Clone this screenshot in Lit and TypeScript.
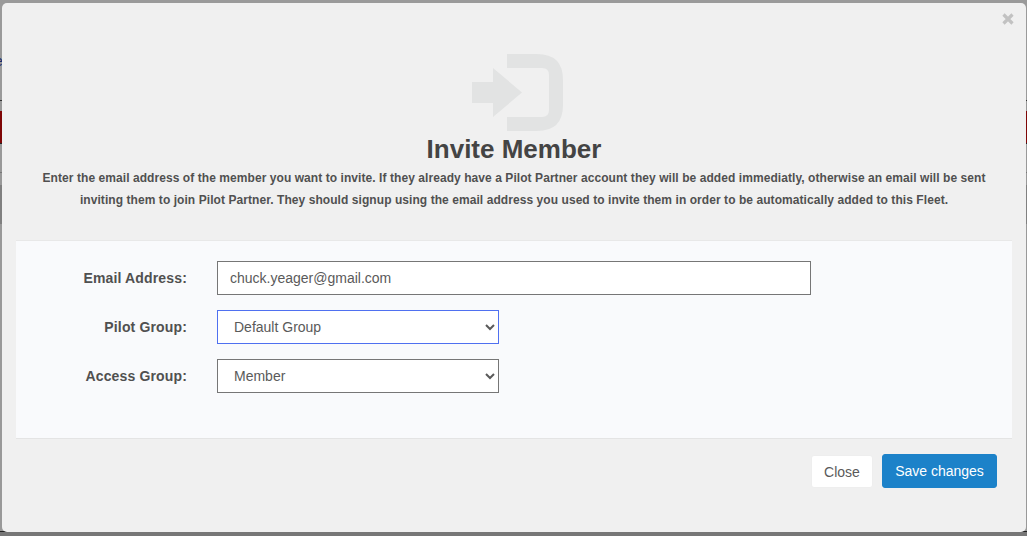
import { LitElement, html, css } from "lit";
import { customElement } from "lit/decorators.js";

@customElement("app-root")
export class AppRoot extends LitElement {
  static styles = css`
    :host {
      display: block;
      width: 1027px;
      height: 536px;
      overflow: hidden;
      position: relative;
      background: #999;
      font-family: "Liberation Sans", Arial, sans-serif;
      color: #444;
    }
    .bg {
      position: absolute;
      inset: 0;
      display: flex;
      flex-direction: column;
    }
    .bg-top { height: 100px; background: #9a9a9a; border-bottom: 1px solid #333; overflow: hidden; position: relative; }
    .stub { position: absolute; left: -5px; top: 53px; font-size: 14px; color: #1a2a66; }
    .bg-red { height: 32px; margin-top: 10px; background: #7f0606; border-bottom: 1px solid #222; }
    .bg-mid { height: 28px; border-bottom: 1px solid #777; }
    .bg-dark { height: 39px; margin-top: 12px; background: #808080; }
    .bg-bottom { flex: 1; background: #999; }
    .bg-line { height: 1px; background: #222; }
    .bg-base { height: 4px; background: #777; }
    .modal {
      position: absolute;
      left: 2px;
      top: 3px;
      width: 1024px;
      height: 529px;
      box-sizing: border-box;
      background: #f0f0f0;
      border-radius: 5px;
      display: flex;
      flex-direction: column;
    }
    .close-x {
      position: absolute;
      right: 12px;
      top: 10px;
      width: 12px;
      height: 12px;
    }
    .head {
      display: flex;
      flex-direction: column;
      align-items: center;
      height: 237px;
      padding: 0 14px;
      box-sizing: border-box;
    }
    .logo { margin: 51px 0 0 7px; display: block; }
    h1 {
      margin: 3px 0 0;
      font-size: 26px;
      line-height: 30px;
      font-weight: 700;
      color: #444;
    }
    .desc {
      margin: 3px 0 0;
      text-align: center;
      font-size: 12px;
      line-height: 22px;
      font-weight: 700;
      letter-spacing: 0.066px;
      color: #505050;
      white-space: nowrap;
    }
    .body {
      margin: 0 14px;
      height: 199px;
      box-sizing: border-box;
      background: #f9fafc;
      border-top: 1px solid #e8e8e8;
      border-bottom: 1px solid #e4e4e4;
      padding-top: 20px;
      display: flex;
      flex-direction: column;
      gap: 15px;
    }
    .row { display: flex; align-items: center; height: 34px; }
    label {
      width: 171px;
      text-align: right;
      margin-right: 30px;
      font-size: 14px;
      font-weight: 700;
      letter-spacing: 0.15px;
      color: #505050;
    }
    .field {
      box-sizing: border-box;
      height: 34px;
      border: 1px solid #767676;
      background: #fff;
      font-family: inherit;
      font-size: 14px;
      color: #5a5a5a;
      border-radius: 0;
      outline: none;
    }
    input.field { width: 594px; padding: 0 12px; }
    select.field { width: 282px; padding: 0 12px; }
    select.focus { border-color: #4f70f0; }
    .foot {
      flex: 1;
      display: flex;
      justify-content: flex-end;
      align-items: flex-start;
      gap: 9px;
      padding: 15px 29px 0 0;
    }
    button {
      font-family: inherit;
      font-size: 14px;
      box-sizing: border-box;
      border-radius: 3px;
      cursor: pointer;
    }
    .btn-close {
      margin-top: 1px;
      width: 62px;
      height: 33px;
      background: #fff;
      color: #5a5a5a;
      border: 1px solid #eee;
    }
    .btn-save {
      width: 115px;
      height: 34px;
      background: #1c82c9;
      color: #fff;
      border: 1px solid #1c82c9;
    }
  `;

  render() {
    return html`
      <div class="bg">
        <div class="bg-top"><span class="stub">e</span></div>
        <div class="bg-red"></div>
        <div class="bg-mid"></div>
        <div class="bg-dark"></div>
        <div class="bg-bottom"></div>
        <div class="bg-line"></div>
        <div class="bg-base"></div>
      </div>
      <div class="modal">
        <svg class="close-x" viewBox="0 0 12 12" aria-label="Close">
          <path d="M1.5 1.5 L10.5 10.5 M10.5 1.5 L1.5 10.5" stroke="#c2c2c2" stroke-width="3.2" fill="none" />
        </svg>
        <div class="head">
          <svg class="logo" width="91" height="77" viewBox="0 0 91 77">
            <path d="M0 28 H21 V14 L50 38.5 L21 63 V49 H0 Z" fill="#e2e3e3" />
            <path d="M35 0 H65 Q91 0 91 26 V51 Q91 77 65 77 H35 V63 H70 Q77 63 77 56 V21 Q77 14 70 14 H35 Z" fill="#e2e3e3" />
          </svg>
          <h1>Invite Member</h1>
          <p class="desc">
            Enter the email address of the member you want to invite. If they already have a Pilot Partner account they will be added immediatly, otherwise an email will be sent<br />
            inviting them to join Pilot Partner. They should signup using the email address you used to invite them in order to be automatically added to this Fleet.
          </p>
        </div>
        <div class="body">
          <div class="row">
            <label>Email Address:</label>
            <input class="field" type="text" .value=${"chuck.yeager@gmail.com"} />
          </div>
          <div class="row">
            <label>Pilot Group:</label>
            <select class="field focus"><option>Default Group</option></select>
          </div>
          <div class="row">
            <label>Access Group:</label>
            <select class="field"><option>Member</option></select>
          </div>
        </div>
        <div class="foot">
          <button class="btn-close">Close</button>
          <button class="btn-save">Save changes</button>
        </div>
      </div>
    `;
  }
}
